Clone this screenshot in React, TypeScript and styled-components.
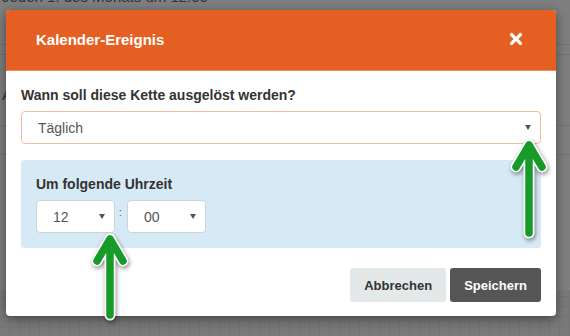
import * as React from "react";
import styled, { createGlobalStyle } from "styled-components";
import { FaTimes } from "react-icons/fa";

const GlobalStyle = createGlobalStyle`
  html, body {
    margin: 0;
    padding: 0;
    background: #7f7f7f;
  }
  body {
    font-family: "Liberation Sans", Arial, sans-serif;
  }
`;

const Page = styled.div`
  position: relative;
  width: 570px;
  height: 336px;
  overflow: hidden;
  background: #7f7f7f;
`;

const BackPage = styled.div`
  display: flex;
  flex-direction: column;
  height: 100%;
`;

const BackText = styled.div<{ $top?: number; $h: number; $pad?: number }>`
  box-sizing: border-box;
  margin-top: ${(p) => p.$top ?? 0}px;
  padding: ${(p) => p.$pad ?? 0}px 0 0 2px;
  height: ${(p) => p.$h}px;
  font-size: 15px;
  line-height: 17px;
  color: #333;
`;

const BackBand = styled.div<{ $h: number }>`
  height: ${(p) => p.$h}px;
  border-top: 1px solid #737373;
  border-bottom: 1px solid #737373;
`;

const BackSpacer = styled.div<{ $h: number }>`
  height: ${(p) => p.$h}px;
`;

const BackGrid = styled.div`
  flex: 1;
  background-color: #7a7a7a;
  background-image:
    repeating-linear-gradient(0deg, transparent 0 9px, #747474 9px 10px),
    repeating-linear-gradient(90deg, transparent 0 9px, #747474 9px 10px);
`;

const Overlay = styled.div`
  position: absolute;
  inset: 0;
  padding: 10px 14px 0 6px;
`;

const Modal = styled.div`
  width: 550px;
  background: #fff;
  border-radius: 4px;
  overflow: hidden;
  box-shadow: 0 3px 12px rgba(0, 0, 0, 0.45);
`;

const Header = styled.div`
  height: 61px;
  box-sizing: border-box;
  display: flex;
  align-items: center;
  justify-content: space-between;
  padding: 0 31px 2px 30px;
  background: #e55f23;
  border-bottom: 1px solid #f48a5a;
`;

const Title = styled.h4`
  margin: 0;
  color: #fff;
  font-size: 15px;
  font-weight: bold;
`;

const CloseButton = styled.button`
  border: 0;
  padding: 0;
  background: none;
  color: #fff;
  display: flex;
  cursor: pointer;
`;

const Body = styled.div`
  padding: 16px 15px 14px 15px;
  display: flex;
  flex-direction: column;
`;

const Label = styled.label`
  display: block;
  font-size: 14px;
  font-weight: bold;
  color: #333;
  margin-bottom: 8px;
`;

const Select = styled.div<{ $accent?: boolean; $w?: number }>`
  box-sizing: border-box;
  height: 33px;
  width: ${(p) => (p.$w ? `${p.$w}px` : "100%")};
  display: flex;
  align-items: center;
  justify-content: space-between;
  padding: 0 9px 0 16px;
  background: #fff;
  border: 1px solid ${(p) => (p.$accent ? "#f5bc9f" : "#cfd3d6")};
  border-radius: 4px;
  font-size: 14px;
  color: #555;
`;

const Caret = styled.span`
  width: 0;
  height: 0;
  border-left: 3.5px solid transparent;
  border-right: 3.5px solid transparent;
  border-top: 5px solid #555;
`;

const TimePanel = styled.div`
  margin-top: 16px;
  padding: 16px 15px 15px 15px;
  background: #d6eaf5;
  border-radius: 3px;
`;

const TimeRow = styled.div`
  display: flex;
  align-items: center;
  gap: 4px;
`;

const Colon = styled.span`
  width: 4px;
  font-size: 10px;
  color: #555;
  align-self: flex-start;
  margin-top: 7px;
`;

const Footer = styled.div`
  margin-top: 20px;
  display: flex;
  justify-content: flex-end;
  gap: 4px;
`;

const Button = styled.button<{ $primary?: boolean }>`
  height: 34px;
  padding: 0 ${(p) => (p.$primary ? 14 : 14)}px;
  border: 0;
  border-radius: 3px;
  font-family: "Liberation Sans", Arial, sans-serif;
  font-size: 13px;
  font-weight: bold;
  background: ${(p) => (p.$primary ? "#555" : "#e3e8e8")};
  color: ${(p) => (p.$primary ? "#fff" : "#333")};
`;

const ArrowSvg = styled.svg<{ $x: number; $y: number }>`
  position: absolute;
  left: ${(p) => p.$x}px;
  top: ${(p) => p.$y}px;
  overflow: visible;
  filter: drop-shadow(1px 2px 2px rgba(0, 0, 0, 0.45));
`;

const Arrow = ({ x, y, h }: { x: number; y: number; h: number }) => {
  const d = `M20 ${h} L20 4 M7 26 L20 4 L33 26`;
  return (
    <ArrowSvg $x={x} $y={y} width={40} height={h + 4} viewBox={`0 0 40 ${h + 4}`}>
      <path d={d} fill="none" stroke="#fff" strokeWidth={11} strokeLinecap="round" strokeLinejoin="round" />
      <path d={d} fill="none" stroke="#169a28" strokeWidth={7.5} strokeLinecap="round" strokeLinejoin="round" />
    </ArrowSvg>
  );
};

export default function App() {
  return (
    <Page>
      <GlobalStyle />
      <BackPage>
        <BackText $top={-12} $h={56}>Jeden 1. des Monats um 12:00</BackText>
        <BackBand $h={9} />
        <BackText $h={70} $pad={31}>A</BackText>
        <BackBand $h={28} />
        <BackSpacer $h={135} />
        <BackGrid />
      </BackPage>
      <Overlay>
        <Modal>
          <Header>
            <Title>Kalender-Ereignis</Title>
            <CloseButton aria-label="Schließen">
              <FaTimes size={18} />
            </CloseButton>
          </Header>
          <Body>
            <Label>Wann soll diese Kette ausgelöst werden?</Label>
            <Select $accent>
              <span>Täglich</span>
              <Caret />
            </Select>
            <TimePanel>
              <Label>Um folgende Uhrzeit</Label>
              <TimeRow>
                <Select $w={79}>
                  <span>12</span>
                  <Caret />
                </Select>
                <Colon>:</Colon>
                <Select $w={79}>
                  <span>00</span>
                  <Caret />
                </Select>
              </TimeRow>
            </TimePanel>
            <Footer>
              <Button>Abbrechen</Button>
              <Button $primary>Speichern</Button>
            </Footer>
          </Body>
        </Modal>
      </Overlay>
      <Arrow x={509} y={141} h={92} />
      <Arrow x={90} y={235} h={80} />
    </Page>
  );
}
